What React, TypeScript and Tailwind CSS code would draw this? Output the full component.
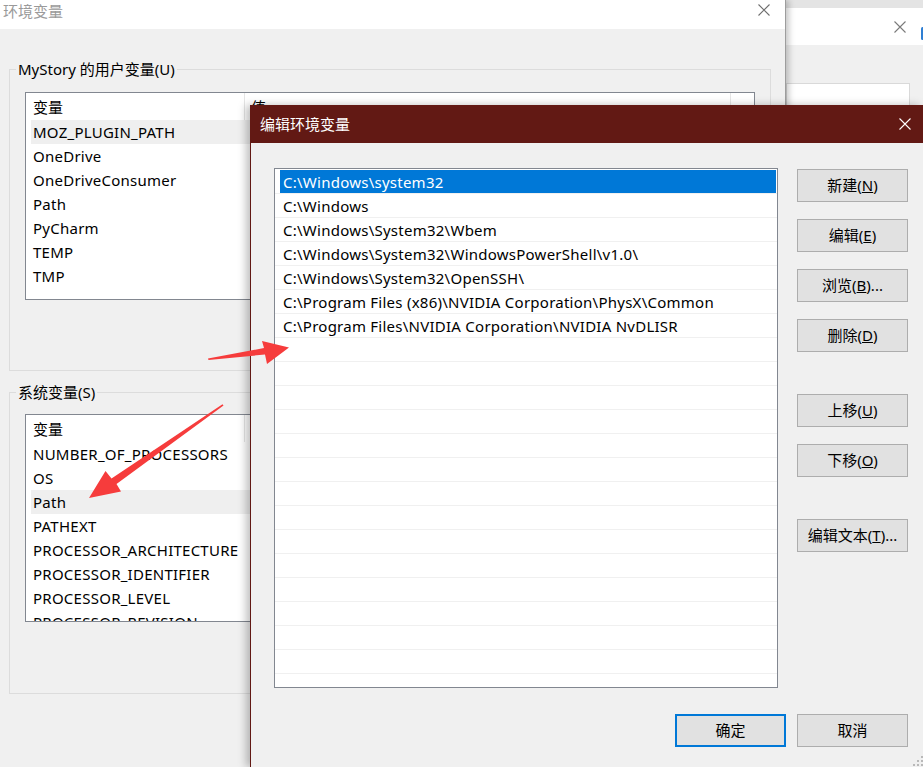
import React from "react";

const userVars = ["MOZ_PLUGIN_PATH", "OneDrive", "OneDriveConsumer", "Path", "PyCharm", "TEMP", "TMP"];
const sysVars = [
  "NUMBER_OF_PROCESSORS",
  "OS",
  "Path",
  "PATHEXT",
  "PROCESSOR_ARCHITECTURE",
  "PROCESSOR_IDENTIFIER",
  "PROCESSOR_LEVEL",
  "PROCESSOR_REVISION",
];
const paths = [
  "C:\\Windows\\system32",
  "C:\\Windows",
  "C:\\Windows\\System32\\Wbem",
  "C:\\Windows\\System32\\WindowsPowerShell\\v1.0\\",
  "C:\\Windows\\System32\\OpenSSH\\",
  "C:\\Program Files (x86)\\NVIDIA Corporation\\PhysX\\Common",
  "C:\\Program Files\\NVIDIA Corporation\\NVIDIA NvDLISR",
];

function CloseX({ stroke, className = "" }: { stroke: string; className?: string }) {
  return (
    <svg width="12" height="12" viewBox="0 0 12 12" className={className}>
      <path d="M0.5 0.5 L11.5 11.5 M11.5 0.5 L0.5 11.5" stroke={stroke} strokeWidth="1.1" fill="none" />
    </svg>
  );
}

function VarList({ rows, selected }: { rows: string[]; selected: string }) {
  return (
    <div className="h-[208px] w-[730px] overflow-hidden border border-[#828790] bg-white">
      <div className="flex h-[27px] items-center">
        <div className="w-[218px] pl-[7px] leading-[20px]">变量</div>
        <div className="h-full w-px bg-[#e5e5e5]" />
        <div className="w-[485px] pl-[6px] leading-[20px]">值</div>
        <div className="h-full w-px bg-[#e5e5e5]" />
      </div>
      {rows.map((r) => (
        <div
          key={r}
          className={
            r === selected
              ? "ml-[5px] h-[24px] w-[300px] bg-[#efefef] pl-[2px] leading-[24px] tracking-[0.25px] whitespace-nowrap"
              : "ml-[5px] h-[24px] w-[300px] pl-[2px] leading-[24px] tracking-[0.25px] whitespace-nowrap"
          }
        >
          {r}
        </div>
      ))}
    </div>
  );
}

function Btn({ children, primary }: { children: React.ReactNode; primary?: boolean }) {
  return (
    <div
      className={
        primary
          ? "flex h-[33px] w-[111px] items-center justify-center border-2 border-[#0078d7] bg-[#e1e1e1] text-[15px]"
          : "flex h-[33px] w-[111px] items-center justify-center border border-[#adadad] bg-[#e1e1e1] text-[15px]"
      }
    >
      {children}
    </div>
  );
}

function PathList() {
  const rows = Array.from({ length: 22 }, (_, i) => paths[i] ?? "");
  return (
    <div className="h-[520px] w-[504px] overflow-hidden border border-[#828790] bg-white pt-[1px]">
      {rows.map((p, i) => (
        <div key={i} className="h-[24px] border-b border-[#f0f0f0]">
          <div
            className={
              i === 0
                ? "ml-[5px] mr-[1px] h-[23px] bg-[#0078d7] pl-[3px] leading-[24px] tracking-[0.25px] text-white"
                : "ml-[5px] mr-[1px] h-[23px] pl-[3px] leading-[24px] tracking-[0.25px]"
            }
          >
            {p}
          </div>
        </div>
      ))}
    </div>
  );
}

export default function App() {
  return (
    <div className="relative h-[767px] w-[923px] overflow-hidden bg-[#e4e4e4] font-['Noto_Sans','Noto_Sans_CJK_SC',sans-serif] text-[15px] text-black">
      {/* window behind, right edge */}
      <div className="absolute left-[786px] top-[8px] h-[759px] w-[150px] bg-[#f0f0f0]">
        <div className="relative h-[37px] bg-white">
          <CloseX stroke="#7a7a7a" className="absolute left-[108px] top-[13px]" />
          <div className="absolute left-[135px] top-[19px] h-[13px] w-[3px] rounded-sm bg-[#2f7fd3]" />
        </div>
        <div className="mt-[38px] h-[60px] w-[124px] border border-[#d9d9d9] bg-white" />
      </div>

      {/* 环境变量 window */}
      <div className="absolute left-0 top-0 h-[767px] w-[786px] border-r border-[#9d9d9d] bg-[#f0f0f0] shadow-[3px_0_6px_rgba(0,0,0,0.22)]">
        <div className="flex h-[29px] items-start justify-between bg-white">
          <span className="pl-[3px] pt-[1px] leading-[20px] text-[#9a9a9a]">环境变量</span>
          <CloseX stroke="#6e6e6e" className="mr-[15px] mt-[4px]" />
        </div>
        <fieldset className="ml-[9px] mt-[30px] h-[312px] w-[762px] border border-[#dcdcdc] px-[15px]">
          <legend className="-ml-[9px] px-[2px] leading-[20px]">MyStory 的用户变量(U)</legend>
          <div className="mt-[13px]">
            <VarList rows={userVars} selected="MOZ_PLUGIN_PATH" />
          </div>
        </fieldset>
        <fieldset className="ml-[9px] mt-[11px] h-[312px] w-[762px] border border-[#dcdcdc] px-[15px]">
          <legend className="-ml-[9px] px-[2px] leading-[20px]">系统变量(S)</legend>
          <div className="mt-[12px]">
            <VarList rows={sysVars} selected="Path" />
          </div>
        </fieldset>
      </div>

      {/* 编辑环境变量 dialog */}
      <div className="absolute left-[250px] top-[105px] flex h-[662px] w-[673px] flex-col border-l border-[#621914] bg-[#f0f0f0] shadow-[-4px_0_8px_rgba(0,0,0,0.25)]">
        <div className="flex h-[38px] shrink-0 items-center justify-between bg-[#621914] pl-[9px] pr-[12px]">
          <span className="text-white">编辑环境变量</span>
          <CloseX stroke="#ffffff" />
        </div>
        <div className="flex gap-[19px] pl-[23px] pt-[25px]">
          <PathList />
          <div className="flex flex-col pt-[1px]">
            <div className="flex flex-col gap-[17px]">
              <Btn>
                新建(<u>N</u>)
              </Btn>
              <Btn>
                编辑(<u>E</u>)
              </Btn>
              <Btn>
                浏览(<u>B</u>)...
              </Btn>
              <Btn>
                删除(<u>D</u>)
              </Btn>
            </div>
            <div className="mt-[42px] flex flex-col gap-[17px]">
              <Btn>
                上移(<u>U</u>)
              </Btn>
              <Btn>
                下移(<u>O</u>)
              </Btn>
            </div>
            <div className="mt-[42px]">
              <Btn>
                编辑文本(<u>T</u>)...
              </Btn>
            </div>
          </div>
        </div>
        <div className="mt-[26px] flex justify-end gap-[11px] pr-[15px]">
          <Btn primary>确定</Btn>
          <Btn>取消</Btn>
        </div>
        <svg width="12" height="12" viewBox="0 0 12 12" className="absolute bottom-0 right-0">
          <g fill="#b9b9b9">
            <rect x="10" y="1" width="2" height="2" />
            <rect x="6" y="5" width="2" height="2" />
            <rect x="10" y="5" width="2" height="2" />
            <rect x="2" y="9" width="2" height="2" />
            <rect x="6" y="9" width="2" height="2" />
            <rect x="10" y="9" width="2" height="2" />
          </g>
        </svg>
      </div>

      {/* red annotation arrows */}
      <svg width="923" height="767" viewBox="0 0 923 767" className="pointer-events-none absolute left-0 top-0">
        <polygon
          fill="#f63c3c"
          points="208,358.5 264,348 262,341 289,347.5 267,364 265,354.5 208.5,360"
        />
        <polygon
          fill="#f63c3c"
          points="223.5,405.5 116.5,484 121,491.5 89,498 105.5,471 111.5,478.5 222.5,404.3"
        />
      </svg>
    </div>
  );
}
